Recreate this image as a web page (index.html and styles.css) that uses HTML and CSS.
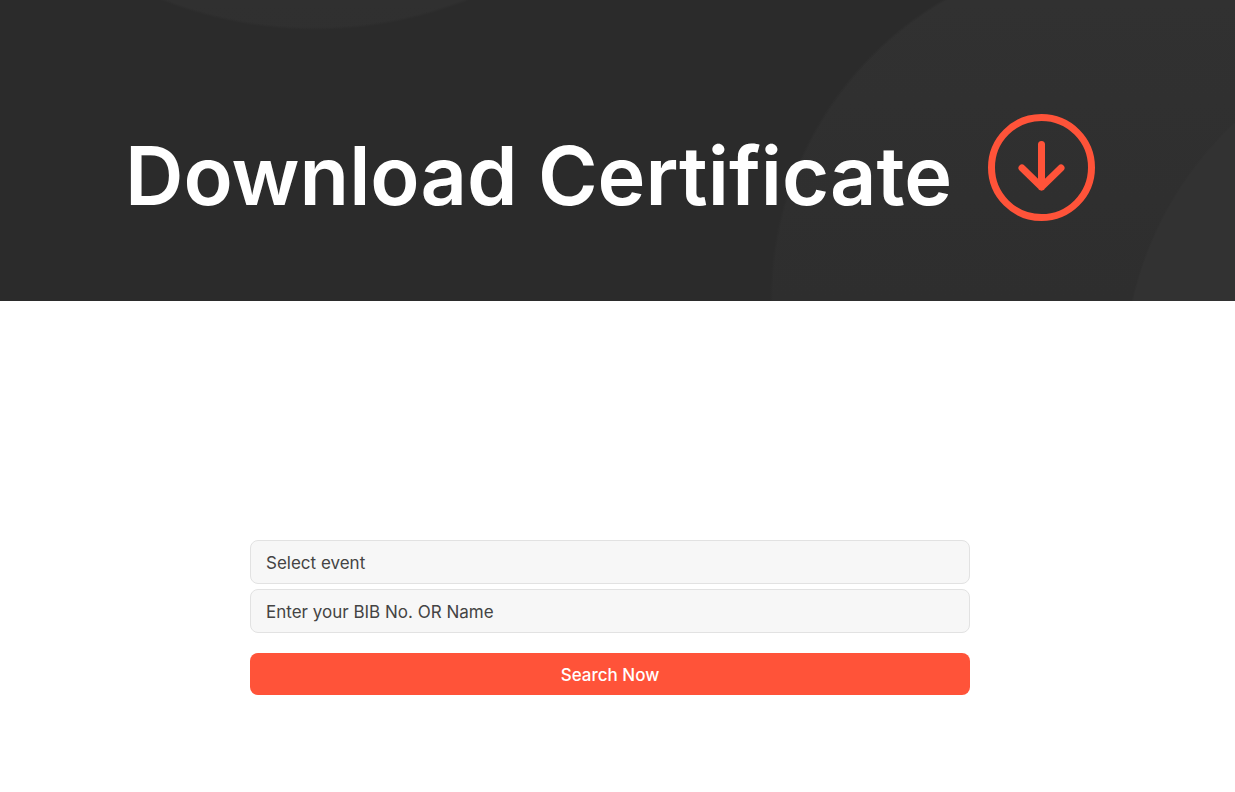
FILE: index.html
```
<!DOCTYPE html>
<html lang="en">
<head>
    <meta charset="UTF-8">
    <meta name="viewport" content="width=device-width, initial-scale=1.0">
    <title>Download Certificate</title>
    <link rel="stylesheet" href="styles.css">
</head>
<body>
    <header class="hero">
        <div class="hero-inner">
            <h1 class="hero-title">Download Certificate</h1>
            <svg class="hero-icon" width="108" height="108" viewBox="0 0 108 108" fill="none" stroke="#ff5339" stroke-linecap="round" stroke-linejoin="round" aria-hidden="true">
                <circle cx="54.5" cy="54.5" r="50" stroke-width="7"/>
                <path d="M54.5 31.5 V74 M35 55 L54.5 74 L74 55" stroke-width="7"/>
            </svg>
        </div>
    </header>

    <main class="content">
        <form class="search-form">
            <select class="field" name="event" aria-label="Select event">
                <option value="">Select event</option>
            </select>
            <input class="field" type="text" name="query" placeholder="Enter your BIB No. OR Name" aria-label="Enter your BIB No. OR Name">
            <button class="search-btn" type="submit">Search Now</button>
        </form>
    </main>
</body>
</html>
```

FILE: styles.css
```
* {
    box-sizing: border-box;
}
body {
    margin: 0;
    font-family: Inter, "Liberation Sans", sans-serif;
    background: #fff;
}
.hero {
    padding: 113px 15px 80px 0;
    background-color: #2b2b2b;
    /* large faint discs */
    background-image:
        radial-gradient(circle 348px at 1471px 377px, #323232 346px, transparent 348px),
        linear-gradient(to bottom, transparent, rgba(43, 43, 43, 0.5)),
        radial-gradient(circle 348px at 1118px 300px, #313131 345px, transparent 348px),
        radial-gradient(circle 418px at 315px -388px, #303030 415px, transparent 418px);
}
.hero-inner {
    display: flex;
    justify-content: space-between;
    align-items: flex-end;
    max-width: 970px;
    margin: 0 auto;
}
.hero-title {
    margin: 0;
    color: #fff;
    font-size: 81px;
    font-weight: 600;
    line-height: 90px;
    white-space: nowrap;
}
.hero-icon {
    flex: none;
}
.content {
    padding: 239px 15px 96px 0;
}
.search-form {
    display: flex;
    flex-direction: column;
    gap: 5px;
    max-width: 720px;
    margin: 0 auto;
}
.field {
    width: 100%;
    height: 44px;
    padding: 2px 15px 0;
    border: 1px solid #e2e2e2;
    border-radius: 8px;
    background: #f7f7f7;
    color: #444;
    font-family: inherit;
    font-size: 17px;
    appearance: none;
}
.field::placeholder {
    color: #444;
    opacity: 1;
}
.search-btn {
    height: 42px;
    margin-top: 15px;
    padding: 2px 15px 0;
    border: none;
    border-radius: 8px;
    background: #ff5339;
    color: #fff;
    font-family: inherit;
    font-size: 17px;
    font-weight: 500;
    cursor: pointer;
}
.search-btn:hover {
    background: #e8452d;
}
```
